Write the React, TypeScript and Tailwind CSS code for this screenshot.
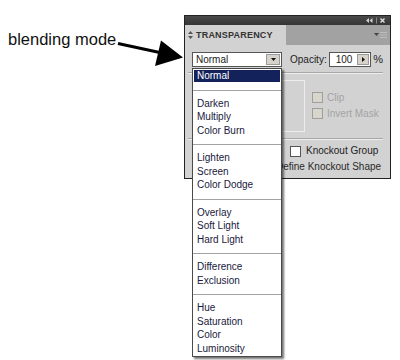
const blendGroups: string[][] = [
  ['Darken', 'Multiply', 'Color Burn'],
  ['Lighten', 'Screen', 'Color Dodge'],
  ['Overlay', 'Soft Light', 'Hard Light'],
  ['Difference', 'Exclusion'],
  ['Hue', 'Saturation', 'Color', 'Luminosity'],
];

function Separator() {
  return (
    <div className="flex h-[14px] items-center">
      <div className="h-px w-full bg-[#a3a3a3]" />
    </div>
  );
}

function BlendMenu() {
  return (
    <div className="absolute left-0 top-[16px] z-10 w-[90px] border border-[#4a4a4a] bg-white shadow-[2px_2px_2px_rgba(0,0,0,0.55)]">
      <div className="m-px flex h-[12px] items-center bg-[#14225c] pl-[3px] text-white">Normal</div>
      <Separator />
      {blendGroups.map((group, i) => (
        <div key={i}>
          {group.map((name) => (
            <div key={name} className="flex h-[13.5px] items-center pl-[4px] text-[#1a1a3c]">
              {name}
            </div>
          ))}
          {i < blendGroups.length - 1 && <Separator />}
        </div>
      ))}
    </div>
  );
}

function Checkbox({ disabled = false }: { disabled?: boolean }) {
  return (
    <span
      className={
        disabled
          ? 'block h-[11px] w-[11px] shrink-0 border border-[#a09e98] bg-[#d8d5cc]'
          : 'block h-[11px] w-[11px] shrink-0 border border-[#555] bg-white'
      }
    />
  );
}

function TransparencyPanel() {
  return (
    <div className="flex h-[164px] w-[207px] flex-col border border-[#222] bg-[#d2d2d2] text-[10px] leading-none">
      {/* title bar */}
      <div className="flex h-[9px] items-center justify-end bg-gradient-to-b from-[#4a4a4a] to-[#353535] pr-[3px]">
        <svg width="22" height="7" viewBox="0 0 22 7">
          <path d="M4 1 L1 3.5 L4 6 Z M7.5 1 L4.5 3.5 L7.5 6 Z" fill="#d0d0d0" />
          <rect x="11" y="0.5" width="1" height="6" fill="#8a8a8a" />
          <path d="M15.5 1.5 L19.5 5.5 M19.5 1.5 L15.5 5.5" stroke="#e0e0e0" strokeWidth="1.4" />
        </svg>
      </div>
      {/* tab row */}
      <div className="flex h-[20px] bg-[#a2a2a2]">
        <div className="flex w-[101px] items-center gap-[3px] bg-[#d2d2d2] pl-[3px]">
          <svg width="5" height="8" viewBox="0 0 5 8">
            <path d="M2.5 0 L5 3 L0 3 Z M2.5 8 L5 5 L0 5 Z" fill="#555" />
          </svg>
          <span className="text-[9px] font-bold tracking-[0.2px] text-[#333]">TRANSPARENCY</span>
        </div>
        <div className="flex flex-1 items-center justify-end pr-[2px]">
          <svg width="14" height="8" viewBox="0 0 14 8">
            <path d="M0 2 L5 2 L2.5 5 Z" fill="#444" />
            <path d="M6 1.5 H13 M6 4 H13 M6 6.5 H13" stroke="#bdbdbd" strokeWidth="1" />
          </svg>
        </div>
      </div>
      {/* content */}
      <div className="flex flex-col pl-[3px] pr-[7px] pt-[7px]">
        <div className="flex h-[15px] items-center pl-[4px]">
          <div className="relative">
            <div className="flex h-[15px] w-[90px] items-center border border-[#555] bg-white pl-[3px] text-[#222]">
              <span className="flex-1">Normal</span>
              <span className="mr-px flex h-[11px] w-[14px] items-center justify-center border border-[#9a9a9a] bg-[#d6d3cb]">
                <svg width="5" height="3" viewBox="0 0 5 3">
                  <path d="M0 0 H5 L2.5 3 Z" fill="#111" />
                </svg>
              </span>
            </div>
            <BlendMenu />
          </div>
          <span className="ml-[8px] text-[#222]">Opacity:</span>
          <div className="ml-[2px] flex h-[15px] w-[43px] items-center border border-[#555] bg-white pl-[6px] text-[#222]">
            <span className="flex-1">100</span>
            <span className="mr-px flex h-[11px] w-[12px] items-center justify-center border border-[#9a9a9a] bg-[#d6d3cb]">
              <svg width="3" height="5" viewBox="0 0 3 5">
                <path d="M0 0 L3 2.5 L0 5 Z" fill="#111" />
              </svg>
            </span>
          </div>
          <span className="ml-[2px] text-[11px] text-[#222]">%</span>
        </div>
        <div className="mt-[5px] h-px w-full bg-[#a6a6a6]" />
        <div className="h-px w-full bg-[#efefef]" />
        <div className="mt-[6px] flex h-[52px]">
          <div className="ml-[38px] h-full w-[79px] border border-[#ededed]" />
          <div className="ml-[7px] flex flex-col gap-[5px] pt-[12px] text-[#a3a3a3]">
            <div className="flex items-center gap-[4px]">
              <Checkbox disabled />
              <span>Clip</span>
            </div>
            <div className="flex items-center gap-[4px]">
              <Checkbox disabled />
              <span>Invert Mask</span>
            </div>
          </div>
        </div>
        <div className="mt-[6px] h-px w-full bg-[#a6a6a6]" />
        <div className="h-px w-full bg-[#efefef]" />
        <div className="mt-[5px] flex h-[12px] items-center pl-[5px] text-[#222]">
          <Checkbox />
          <span className="w-[86px]" />
          <Checkbox />
          <span className="ml-[5px] whitespace-nowrap">Knockout Group</span>
        </div>
        <div className="mt-[4px] flex h-[12px] items-center pl-[5px] text-[#2a2a2a]">
          <Checkbox />
          <span className="ml-[72px] whitespace-nowrap">Define Knockout Shape</span>
        </div>
      </div>
    </div>
  );
}

export default function App() {
  return (
    <div className="flex h-[360px] w-[400px] bg-white pt-[15px] font-['Liberation_Sans',Arial,sans-serif]">
      <div className="relative w-[184px]">
        <div className="pl-[8px] pt-[16px] text-[16.5px] leading-none text-[#111]">blending mode</div>
        <svg className="absolute left-0 top-0" width="184" height="70" viewBox="0 15 184 70">
          <path d="M118 43.5 L162 53" stroke="#000" strokeWidth="3" />
          <path d="M161 40.5 L183 57.5 L155 66 Z" fill="#000" />
        </svg>
      </div>
      <TransparencyPanel />
    </div>
  );
}
